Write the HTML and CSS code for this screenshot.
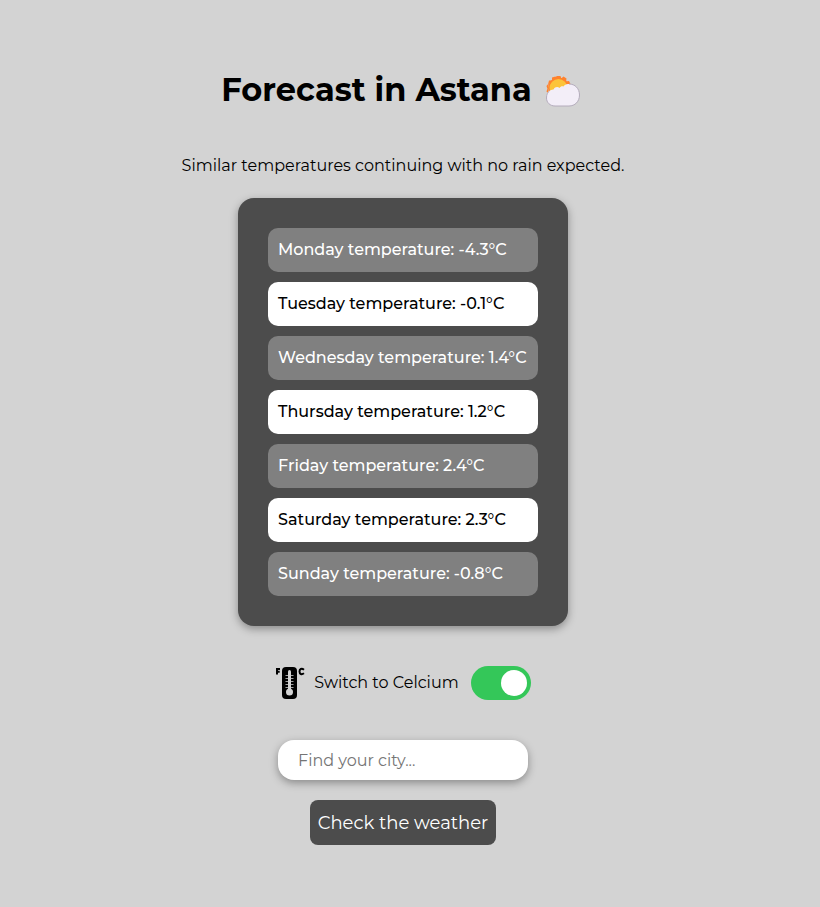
FILE: index.html
```html
<!DOCTYPE html>
<html lang="en">
<head>
<meta charset="utf-8">
<meta name="viewport" content="width=device-width, initial-scale=1">
<title>Forecast in Astana</title>
<link rel="stylesheet" href="styles.css">
</head>
<body>
<main class="app">
  <h1 class="title">
    <span>Forecast in Astana</span>
    <svg class="title-icon" viewBox="0 0 36 36" aria-hidden="true">
      <g fill="#ff822d">
        <circle cx="13.500" cy="15" r="10.500"/>
        <path d="M10.500 6l1-3h4l1 3zM15.500 6l3-2.500 3 2-.5 3zM20 8.500l4-.5 1.500 3-2 2zM7 8.500l0-4 3.500-1L13 6zM3 11.500l1-4 4 0zM2.500 16l-1-3 2.500-3zM3.500 20.500L1.500 18.500 3 14z"/>
      </g>
      <circle cx="13.500" cy="15" r="9" fill="#fcc43a"/>
      <path fill="#f3eef8" d="M10 33C5 33 1.500 29.500 1.500 24.500S4 17 8.500 16.500c1.500-3 4.500-3 6-1.500 1-2 3-2 4-1.500 1-2 3.500-2.500 6-2.500 6 0 10 5 10 11S30 33 24 33z"/>
      <path fill="none" stroke="#b4acbc" d="M24 11c6 0 10.500 4.500 10.500 11S30 33 24 33H10C5 33 1.500 29.500 1.500 25c0-3.500 1-5.500 3-7"/>
    </svg>
  </h1>
  <p class="summary">Similar temperatures continuing with no rain expected.</p>
  <ul class="forecast">
    <li>Monday temperature: -4.3°C</li>
    <li>Tuesday temperature: -0.1°C</li>
    <li>Wednesday temperature: 1.4°C</li>
    <li>Thursday temperature: 1.2°C</li>
    <li>Friday temperature: 2.4°C</li>
    <li>Saturday temperature: 2.3°C</li>
    <li>Sunday temperature: -0.8°C</li>
  </ul>
  <div class="units">
    <svg class="units-icon" viewBox="0 0 30 34" aria-hidden="true">
      <rect x="7" y="1" width="15" height="32" rx="4"/>
      <path fill="none" stroke="#000" stroke-width="2" d="M2 8.500V3H5M2 5.800H4.700M29 3.800C26.500 1.800 24.500 3 24.500 5.500S26.500 9 29 7.200"/>
      <path fill="none" stroke="#a0a0a0" d="M10.500 9.500h8M10.500 12.500h8M10.500 15.500h8M10.500 18.500h8M10.500 21.500h8"/>
      <path stroke="#d3d3d3" stroke-width="3" stroke-linecap="round" d="M14.500 5.500V25"/>
      <circle cx="14.500" cy="26" r="3.500" fill="#d3d3d3"/>
    </svg>
    <label for="unit-switch">Switch to Celcium</label>
    <input class="switch" id="unit-switch" type="checkbox" role="switch" checked>
  </div>
  <form class="search">
    <input class="city" type="text" placeholder="Find your city..." aria-label="City">
    <button class="submit" type="submit">Check the weather</button>
  </form>
</main>
</body>
</html>
```
FILE: styles.css
```css
* {
  box-sizing: border-box;
}

body {
  margin: 0;
  padding-right: 14px;
  background: #d3d3d3;
  color: #000;
  font: 16px/20px Montserrat, Inter, sans-serif;
}

.app {
  display: flex;
  flex-direction: column;
  align-items: center;
  padding: 70px 20px 60px;
}

.title {
  display: flex;
  align-items: center;
  gap: 13px;
  margin: 0;
  padding-right: 4px;
  font-size: 32px;
  line-height: 40px;
  font-weight: 700;
}

.title-icon {
  width: 36px;
  height: 36px;
  margin-top: 2px;
}

.summary {
  margin: 46px 0 22px;
}

.forecast {
  display: grid;
  gap: 10px;
  width: min(100%, 330px);
  margin: 0;
  padding: 30px;
  list-style: none;
  border-radius: 16px;
  background: #4c4c4c;
  box-shadow: 0 3px 8px rgba(0, 0, 0, 0.35);
}

.forecast li {
  padding: 12px 10px;
  border-radius: 10px;
  background: #fff;
  font-weight: 500;
}

.forecast li:nth-child(odd) {
  background: #808080;
  color: #fff;
}

.units {
  display: flex;
  align-items: center;
  margin: 40px 0;
}

.units-icon {
  width: 30px;
  height: 34px;
  margin-right: 9px;
}

.switch {
  display: flex;
  align-items: center;
  justify-content: flex-end;
  appearance: none;
  width: 60px;
  height: 34px;
  margin: 0 0 0 12px;
  padding: 4px;
  border-radius: 17px;
  background: #34c759;
}

.switch::before {
  content: "";
  width: 26px;
  height: 26px;
  border-radius: 50%;
  background: #fff;
}

.switch:not(:checked) {
  justify-content: flex-start;
  background: #999;
}

.search {
  display: flex;
  flex-direction: column;
  align-items: center;
  gap: 20px;
}

.city {
  width: 250px;
  height: 40px;
  padding: 0 20px;
  border: 0;
  border-radius: 16px;
  background: #fff;
  font: inherit;
  box-shadow: 0 3px 8px rgba(0, 0, 0, 0.35);
}

.city::placeholder {
  color: #757575;
}

.submit {
  min-width: 186px;
  height: 45px;
  padding: 0 7px;
  border: 0;
  border-radius: 8px;
  background: #4c4c4c;
  color: #fff;
  font: inherit;
  font-size: 18px;
}
```
